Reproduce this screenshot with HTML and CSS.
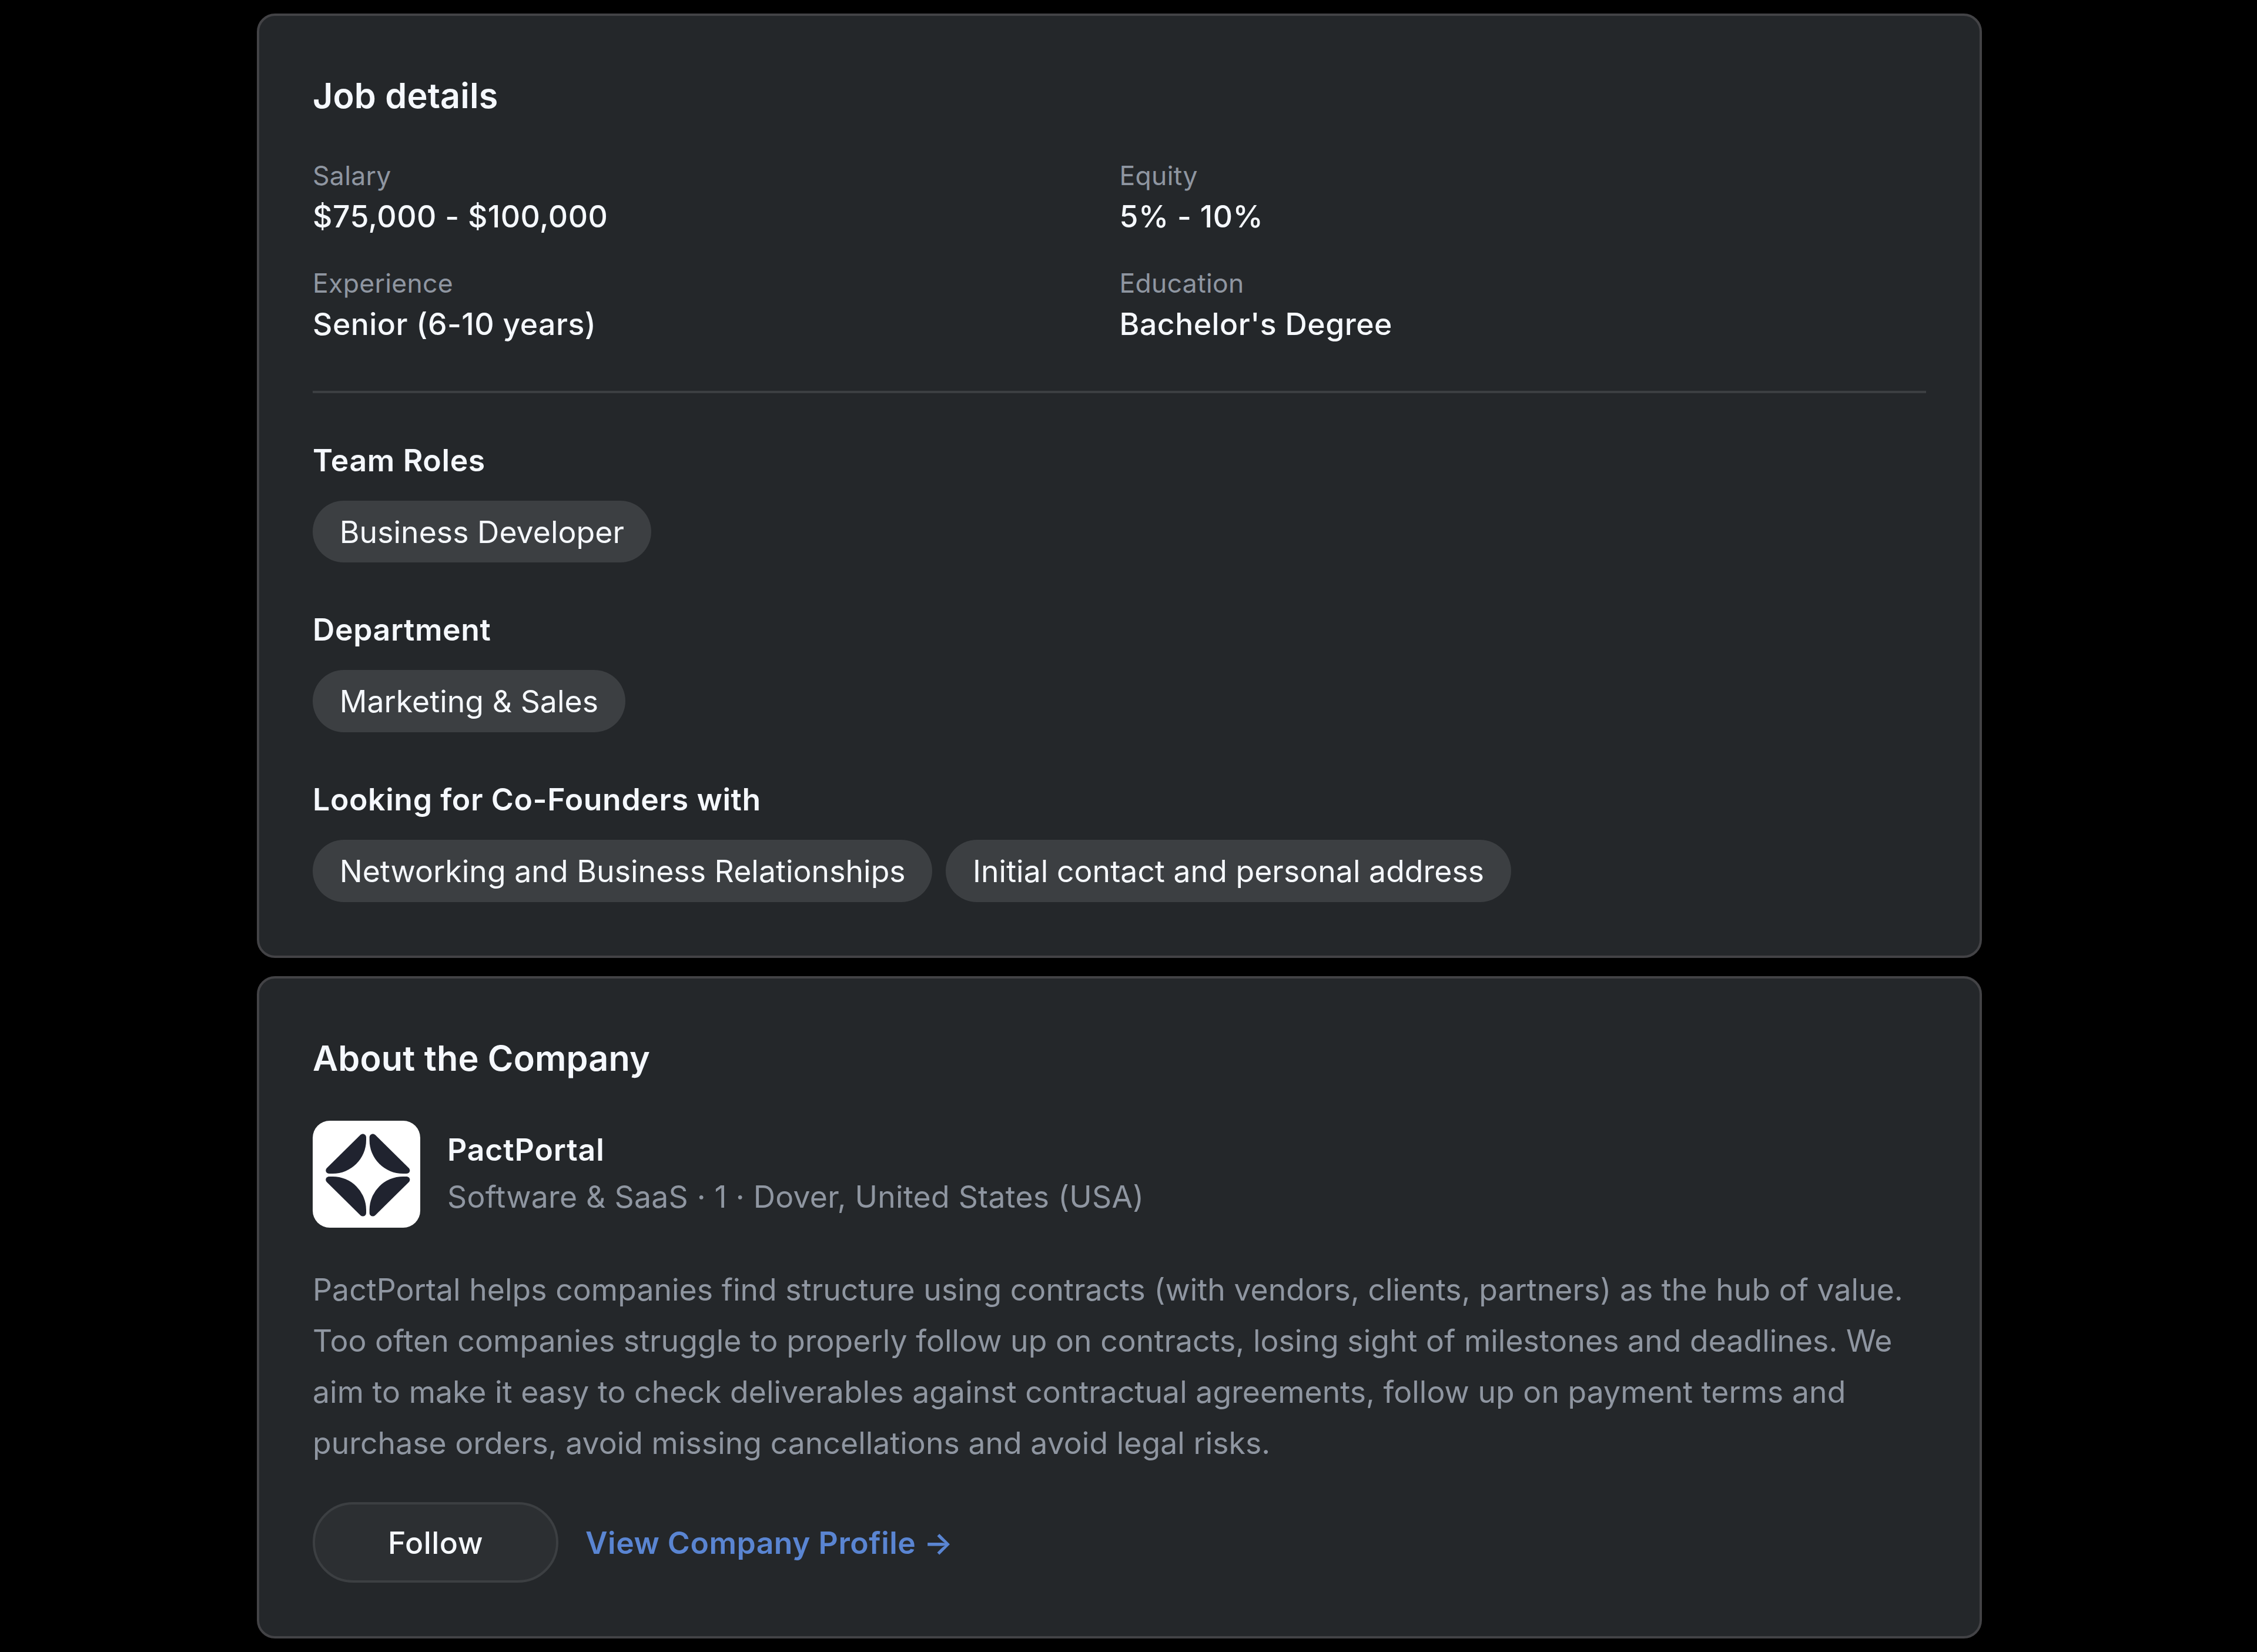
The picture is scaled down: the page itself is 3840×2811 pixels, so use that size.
FILE: index.html
```html
<!DOCTYPE html>
<html lang="en">
  <head>
    <title>Job details</title>
    <meta charset="UTF-8" />
    <link rel="stylesheet" href="styles.css">
  </head>

  <body>

    <section class="card">
      <h2 class="card-title">Job details</h2>

      <div class="details">
        <div>
          <div class="label">Salary</div>
          <div class="value">$75,000 - $100,000</div>
        </div>
        <div>
          <div class="label">Equity</div>
          <div class="value">5% - 10%</div>
        </div>
        <div>
          <div class="label">Experience</div>
          <div class="value">Senior (6-10 years)</div>
        </div>
        <div>
          <div class="label">Education</div>
          <div class="value">Bachelor's Degree</div>
        </div>
      </div>

      <hr class="divider">

      <div class="groups">
        <div>
          <h3 class="group-title">Team Roles</h3>
          <div class="chips">
            <span class="chip">Business Developer</span>
          </div>
        </div>
        <div>
          <h3 class="group-title">Department</h3>
          <div class="chips">
            <span class="chip">Marketing &amp; Sales</span>
          </div>
        </div>
        <div>
          <h3 class="group-title">Looking for Co-Founders with</h3>
          <div class="chips">
            <span class="chip">Networking and Business Relationships</span>
            <span class="chip">Initial contact and personal address</span>
          </div>
        </div>
      </div>
    </section>

    <section class="card">
      <h2 class="card-title">About the Company</h2>

      <div class="company">
        <svg class="logo" viewBox="0 0 183 182">
          <defs>
            <path id="petal" d="M81 24.3 C84.8 20.6 91 22.6 91 28.6 V33 A57 57 0 0 1 34 90 H28.4 C22.4 90 20.4 84.2 24.3 80.3 Z" />
          </defs>
          <g fill="#20232f">
            <use href="#petal" />
            <use href="#petal" transform="matrix(-1 0 0 1 187.6 0)" />
            <use href="#petal" transform="matrix(1 0 0 -1 0 185)" />
            <use href="#petal" transform="matrix(-1 0 0 -1 187.6 185)" />
          </g>
        </svg>
        <div class="company-info">
          <div class="company-name">PactPortal</div>
          <div class="company-meta">Software &amp; SaaS · 1 · Dover, United States (USA)</div>
        </div>
      </div>

      <p class="about">
        PactPortal helps companies find structure using contracts (with vendors, clients, partners) as the hub of value.
        Too often companies struggle to properly follow up on contracts, losing sight of milestones and deadlines. We
        aim to make it easy to check deliverables against contractual agreements, follow up on payment terms and
        purchase orders, avoid missing cancellations and avoid legal risks.
      </p>

      <div class="actions">
        <button class="follow" type="button">Follow</button>
        <a class="profile-link" href="#">View Company Profile →</a>
      </div>
    </section>

  </body>
</html>
```
FILE: styles.css
```css
* {
  box-sizing: border-box;
}
body {
  margin: 0;
  padding: 22.5px 0 0 437px;
  background-color: #000;
  color: #f5f8fd;
  font-family: Inter, sans-serif;
  font-size: 51.7px;
  line-height: 76px;
  display: flex;
  flex-direction: column;
  row-gap: 31px;
}
h2,
h3,
p {
  margin: 0;
}

.card {
  width: 2935px;
  padding: 91px;
  border: 4px solid #434346;
  border-radius: 31px;
  background-color: #24272a;
}
.card-title {
  margin-bottom: 62px;
  font-size: 59.3px;
  font-weight: 600;
  line-height: 89px;
  letter-spacing: 0.2px;
}

.details {
  display: grid;
  grid-template-columns: 1fr 1fr;
  row-gap: 46px;
}
.label {
  color: #8f96a1;
  font-size: 44.5px;
  line-height: 61px;
  letter-spacing: 0.3px;
}
.value {
  font-weight: 500;
  letter-spacing: 0.5px;
}

.divider {
  height: 4px;
  margin: 76px 0;
  border: 0;
  background-color: #3c3f42;
}

.groups {
  display: flex;
  flex-direction: column;
  row-gap: 76px;
}
.group-title {
  margin-bottom: 31px;
  font-size: 51.7px;
  font-weight: 600;
  letter-spacing: 0.65px;
}
.chips {
  display: flex;
  column-gap: 23px;
}
.chip {
  height: 105.7px;
  padding: 0 45.7px;
  border-radius: 53px;
  background-color: #3c3f42;
  line-height: 106px;
  letter-spacing: 0.05px;
}

.company {
  display: flex;
  column-gap: 46px;
}
.logo {
  width: 183px;
  height: 182px;
  border-radius: 29px;
  background-color: #fff;
}
.company-info {
  padding-top: 9px;
  line-height: 80px;
}
.company-name {
  font-weight: 600;
  letter-spacing: 0.9px;
}
.company-meta {
  color: #8f96a1;
  letter-spacing: 0.26px;
}
.about {
  margin: 62px 0 57px;
  color: #8f96a1;
  line-height: 87.2px;
  letter-spacing: 0.05px;
}

.actions {
  display: flex;
  align-items: center;
  column-gap: 46px;
}
.follow {
  width: 418px;
  height: 137px;
  padding: 0;
  border: 4px solid #3c3f42;
  border-radius: 69px;
  background-color: #2c2f32;
  color: #f5f8fd;
  font: inherit;
  font-weight: 500;
  letter-spacing: 0.5px;
}
.profile-link {
  color: #5a85d2;
  font-weight: 600;
  letter-spacing: 0.5px;
  text-decoration: none;
}
```
